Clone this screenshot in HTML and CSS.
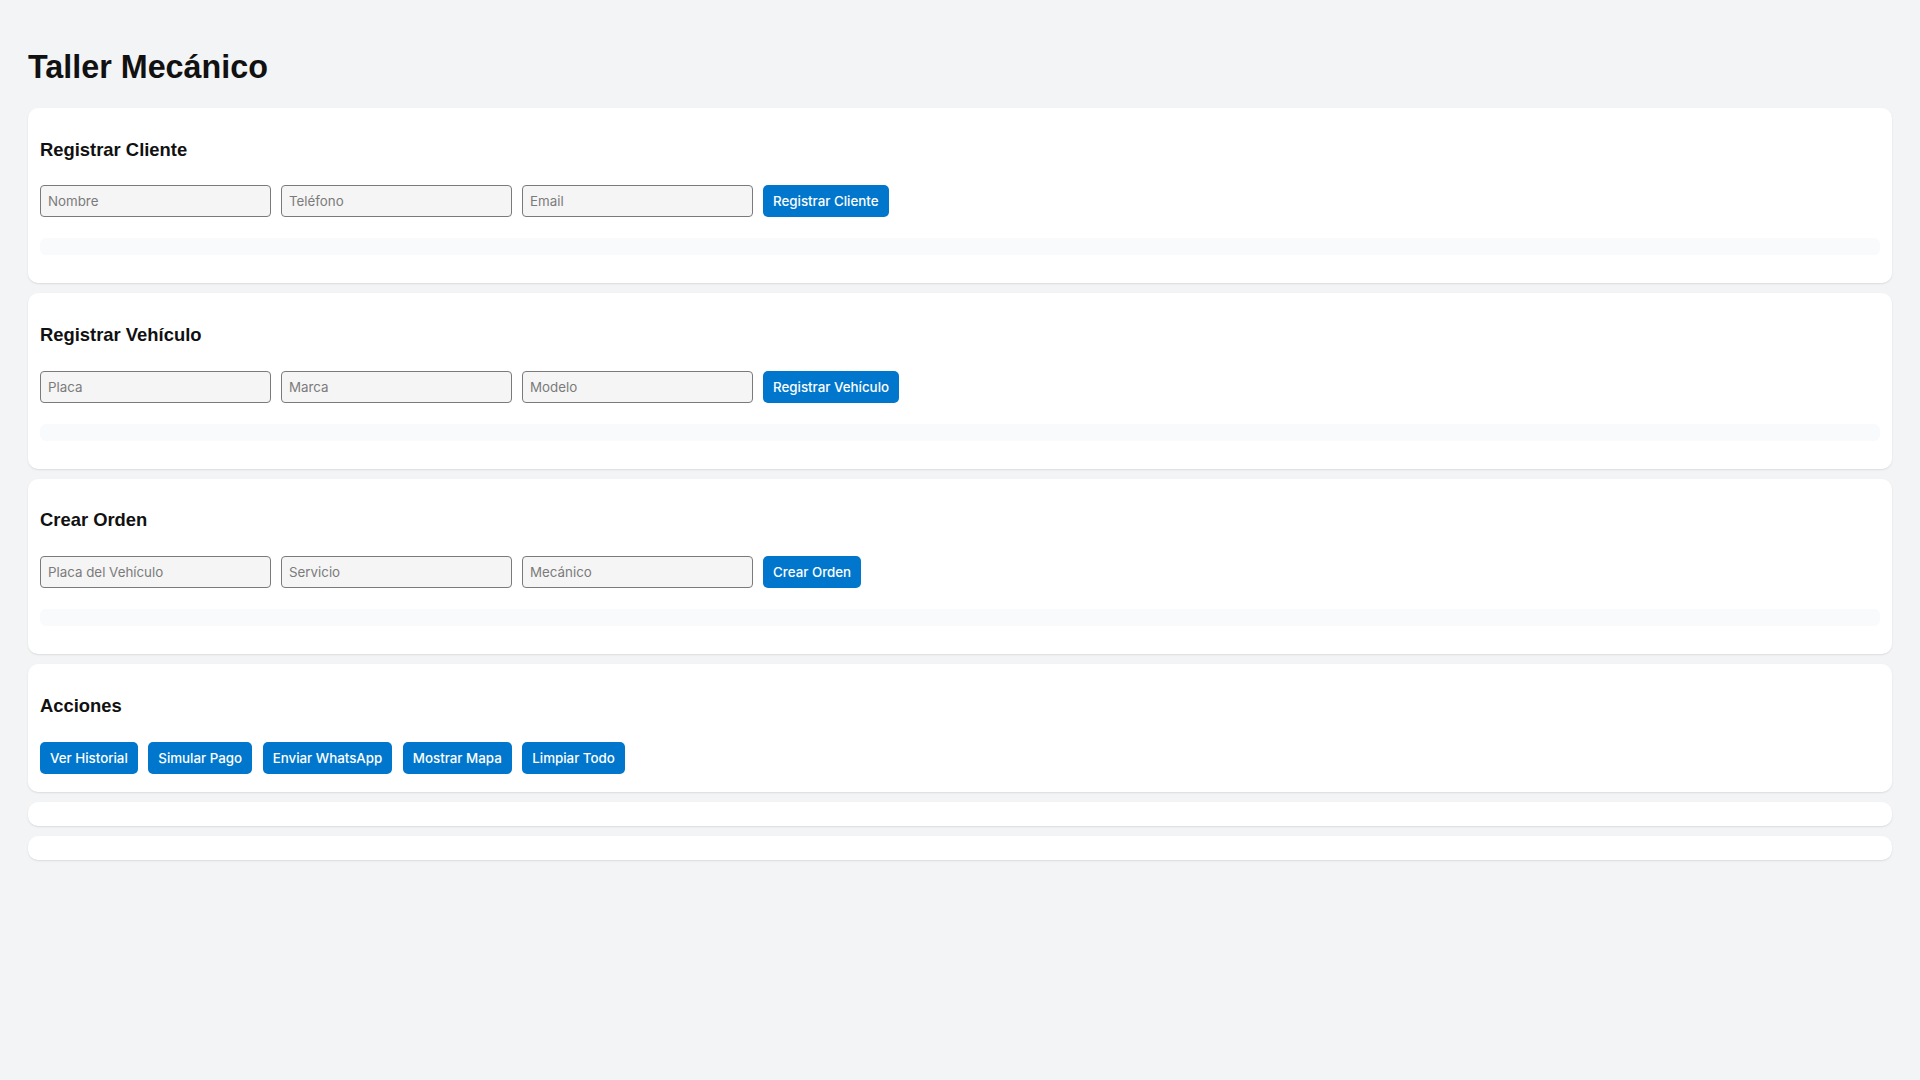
FILE: index.html
```html
<!DOCTYPE html>
<html lang="es">
<head>
<meta charset="utf-8">
<title>Taller Mecánico</title>
<link rel="stylesheet" href="styles.css">
</head>
<body>
<div class="app">
  <h1 class="title">Taller Mecánico</h1>

  <section class="card">
    <h3 class="card-title">Registrar Cliente</h3>
    <div class="row">
      <input class="field" type="text" placeholder="Nombre">
      <input class="field" type="text" placeholder="Teléfono">
      <input class="field" type="text" placeholder="Email">
      <button class="btn" type="button">Registrar Cliente</button>
    </div>
    <div class="list"></div>
  </section>

  <section class="card">
    <h3 class="card-title">Registrar Vehículo</h3>
    <div class="row">
      <input class="field" type="text" placeholder="Placa">
      <input class="field" type="text" placeholder="Marca">
      <input class="field" type="text" placeholder="Modelo">
      <button class="btn" type="button">Registrar Vehículo</button>
    </div>
    <div class="list"></div>
  </section>

  <section class="card">
    <h3 class="card-title">Crear Orden</h3>
    <div class="row">
      <input class="field" type="text" placeholder="Placa del Vehículo">
      <input class="field" type="text" placeholder="Servicio">
      <input class="field" type="text" placeholder="Mecánico">
      <button class="btn" type="button">Crear Orden</button>
    </div>
    <div class="list"></div>
  </section>

  <section class="card">
    <h3 class="card-title">Acciones</h3>
    <div class="row">
      <button class="btn" type="button">Ver Historial</button>
      <button class="btn" type="button">Simular Pago</button>
      <button class="btn" type="button">Enviar WhatsApp</button>
      <button class="btn" type="button">Mostrar Mapa</button>
      <button class="btn" type="button">Limpiar Todo</button>
    </div>
  </section>

  <section class="card card-empty"></section>
  <section class="card card-empty"></section>
</div>
</body>
</html>
```

FILE: styles.css
```css
html, body {
  background: #f3f4f6;
}

body {
  margin: 8px;
  font-family: "Liberation Sans", Arial, sans-serif;
  color: #111111;
}

.app {
  padding: 20px;
}

.title {
  font-size: 32.3px;
  font-weight: 700;
  margin: 21.4px 0;
  line-height: normal;
}

.card {
  background: #ffffff;
  border-radius: 10px;
  padding: 12px;
  margin-bottom: 10px;
  box-shadow: 0 1px 2px rgba(0, 0, 0, 0.1);
}

.card-empty {
  height: 24px;
  box-sizing: border-box;
}

.card-title {
  font-size: 18.4px;
  font-weight: 700;
  margin: 18.72px 0;
  line-height: 22px;
}

.row {
  display: flex;
  align-items: center;
  gap: 10.5px;
  padding: 6px 0;
}

.field {
  box-sizing: border-box;
  width: 230.5px;
  height: 32px;
  padding: 0 7px;
  border: 1px solid #7a7a7a;
  border-radius: 4px;
  background: #f5f5f5;
  font-family: Inter, "Noto Sans", sans-serif;
  font-size: 13.333px;
  color: #222222;
  margin: 0;
}

.field::placeholder {
  color: #7b7b7b;
}

.btn {
  box-sizing: border-box;
  height: 32px;
  padding: 0 10px;
  border: none;
  border-radius: 5px;
  background: #0077cc;
  color: #ffffff;
  font-family: Inter, "Noto Sans", sans-serif;
  font-size: 13.333px;
  font-weight: 500;
  margin: 0;
  cursor: pointer;
}

.list {
  height: 17px;
  margin: 15px 0 16px;
  background: #f9fafb;
  border-radius: 6px;
}
```
